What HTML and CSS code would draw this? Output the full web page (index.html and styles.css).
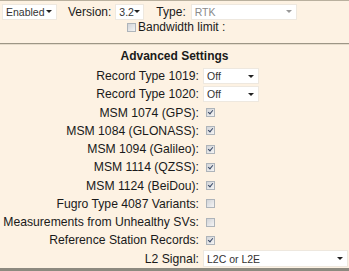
FILE: index.html
```html
<html>
  <head>
    <link rel="stylesheet" href="styles.css">
  </head>
  <body>
    <div class="panel">
      <div class="topbar">
        <span class="select sel-mode"><span>Enabled</span><i class="caret"></i></span>
        <label class="top-label">Version:</label>
        <span class="select sel-version"><span>3.2</span><i class="caret"></i></span>
        <label class="top-label type-label">Type:</label>
        <span class="select sel-type disabled"><span>RTK</span><i class="caret"></i></span>
      </div>
      <div class="bw-row">
        <span class="check"></span>
        <span>Bandwidth limit :</span>
      </div>

      <div class="divider"></div>

      <h2>Advanced Settings</h2>

      <div class="settings">
        <label>Record Type 1019:</label>
        <div class="ctrl"><span class="select sel-small"><span>Off</span><i class="caret"></i></span></div>

        <label>Record Type 1020:</label>
        <div class="ctrl"><span class="select sel-small"><span>Off</span><i class="caret"></i></span></div>

        <label>MSM 1074 (GPS):</label>
        <div class="ctrl"><span class="check checked"></span></div>

        <label>MSM 1084 (GLONASS):</label>
        <div class="ctrl"><span class="check checked"></span></div>

        <label>MSM 1094 (Galileo):</label>
        <div class="ctrl"><span class="check checked"></span></div>

        <label>MSM 1114 (QZSS):</label>
        <div class="ctrl"><span class="check checked"></span></div>

        <label>MSM 1124 (BeiDou):</label>
        <div class="ctrl"><span class="check checked"></span></div>

        <label>Fugro Type 4087 Variants:</label>
        <div class="ctrl"><span class="check"></span></div>

        <label>Measurements from Unhealthy SVs:</label>
        <div class="ctrl"><span class="check"></span></div>

        <label>Reference Station Records:</label>
        <div class="ctrl"><span class="check checked"></span></div>

        <label>L2 Signal:</label>
        <div class="ctrl"><span class="select sel-wide"><span>L2C or L2E</span><i class="caret"></i></span></div>
      </div>
    </div>
  </body>
</html>
```

FILE: styles.css
```css
* {
  box-sizing: border-box;
  margin: 0;
  padding: 0;
}

body {
  background: #fdf2e3;
  font-family: 'Liberation Sans', Arial, sans-serif;
  font-size: 12px;
  color: #1a1a1a;
}

.panel {
  height: 271px;
  border-top: 1px solid #b9b09e;
  border-bottom: 3px solid #8d8a80;
}

/* Top bar */
.topbar {
  display: flex;
  align-items: center;
  height: 19px;
  padding-left: 2px;
  margin-top: 1px;
}

.top-label {
  margin-left: 11px;
  margin-right: 4px;
}

.type-label {
  margin-left: 12px;
  margin-right: 5px;
}

.select {
  display: inline-flex;
  align-items: center;
  justify-content: space-between;
  height: 16px;
  padding: 0 4px 0 3px;
  background: #fff;
  border: 1px solid #eee8df;
  font-size: 10.5px;
  color: #333;
}

.select.disabled {
  color: #8a8a8a;
}

.sel-mode {
  width: 55px;
}

.sel-version {
  width: 29px;
}

.sel-type {
  width: 106px;
}

.sel-small {
  width: 56px;
}

.sel-wide {
  width: 145px;
  height: 17px;
}

.caret {
  width: 0;
  height: 0;
  border-left: 3px solid transparent;
  border-right: 3px solid transparent;
  border-top: 3px solid #222;
}

.disabled .caret {
  border-top-color: #999;
}

/* Bandwidth row */
.bw-row {
  display: flex;
  align-items: center;
  gap: 2px;
  height: 12px;
  padding-left: 127px;
}

/* Checkboxes */
.check {
  display: inline-block;
  position: relative;
  width: 9px;
  height: 9px;
  border: 1px solid #aeb4ba;
  background: linear-gradient(135deg, #d2d4d8, #f4f4f4);
}

.check.checked::after {
  content: '';
  position: absolute;
  left: 2px;
  top: 0;
  width: 2px;
  height: 4px;
  border-right: 1.5px solid #3b4a66;
  border-bottom: 1.5px solid #3b4a66;
  transform: rotate(40deg);
}

.divider {
  margin-top: 10px;
  height: 2px;
  border-top: 1px solid #9d9686;
  border-bottom: 1px solid #e6dccb;
}

h2 {
  font-size: 12px;
  font-weight: bold;
  text-align: center;
  margin-top: 4px;
  height: 14px;
  line-height: 14px;
}

/* Settings grid */
.settings {
  display: grid;
  grid-template-columns: 199px 1fr;
  grid-auto-rows: 18.25px;
  column-gap: 4px;
  margin-top: 4px;
}

.settings label {
  text-align: right;
  align-self: center;
  font-size: 12.2px;
}

.ctrl {
  display: flex;
  align-items: center;
}

.ctrl .check {
  margin-left: 3px;
}
```
